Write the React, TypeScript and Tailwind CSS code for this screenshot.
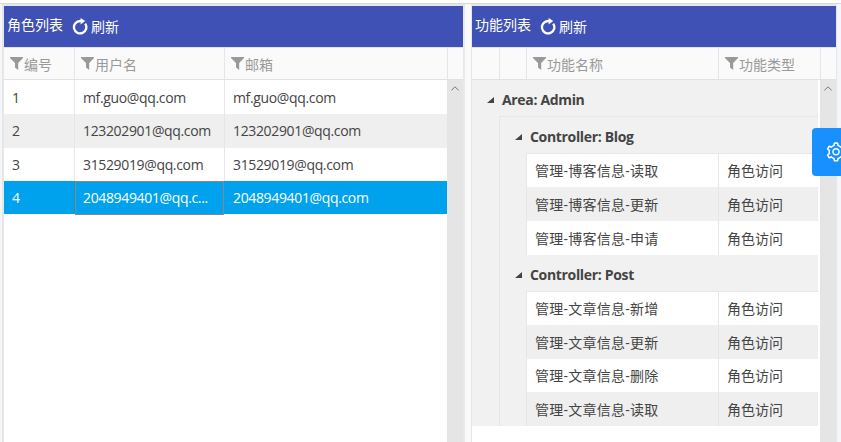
import type { ReactNode } from "react";
import { AiOutlineSetting } from "react-icons/ai";

function ReloadIcon() {
  return (
    <svg viewBox="0 0 16 17" className="-ml-px mr-px h-[17px] w-4 shrink-0" fill="none">
      <path d="M9.5 3H8.3A6.2 6.2 0 1 0 13.2 5.6" stroke="white" strokeWidth="2.3" />
      <path d="M8.6 0L13.2 3L8.6 6.4Z" fill="white" />
    </svg>
  );
}

function FilterIcon() {
  return (
    <svg viewBox="0 0 13 13" className="h-[13px] w-[13px] shrink-0" fill="#999">
      <path d="M0 0H13V1L8.2 6V13L5 10.5V6L0 1Z" />
    </svg>
  );
}

function Toolbar({ title }: { title: string }) {
  return (
    <div className="flex h-[41px] bg-[#3f51b5] pl-[3px] text-white">
      <span className="mt-[9px] w-[66px] leading-5">{title}</span>
      <span className="mt-3 flex h-[17px] items-center">
        <ReloadIcon />
        <span className="ml-[2px] leading-5">刷新</span>
      </span>
    </div>
  );
}

function Head({ children, width }: { children?: ReactNode; width: string }) {
  return (
    <div className={`flex h-full shrink-0 items-center border-r border-[#e6e6e6] pl-[6px] ${width}`}>
      {children && (
        <>
          <FilterIcon />
          <span className="ml-[1px] mt-[2px]">{children}</span>
        </>
      )}
    </div>
  );
}

function Scrollbar() {
  return (
    <div className="flex w-4 shrink-0 justify-center bg-[#e5e5e5] pt-[6px]">
      <svg viewBox="0 0 8 5" className="h-[5px] w-2" fill="none" stroke="#777">
        <path d="M0.3 4.5L4 0.8L7.7 4.5" />
      </svg>
    </div>
  );
}

const users = [
  { id: "1", name: "mf.guo@qq.com", mail: "mf.guo@qq.com", row: "h-[34px] leading-[36px] bg-white" },
  { id: "2", name: "123202901@qq.com", mail: "123202901@qq.com", row: "h-[34px] leading-[34px] bg-[#efefef]" },
  { id: "3", name: "31529019@qq.com", mail: "31529019@qq.com", row: "h-[33px] leading-[34px] bg-white" },
  {
    id: "4",
    name: "2048949401@qq.c...",
    mail: "2048949401@qq.com",
    row: "h-[33px] leading-[34px] bg-[#00a2ed] text-white",
    selected: true,
  },
];

const groups = [
  {
    name: "Blog",
    items: [
      { name: "管理-博客信息-读取", row: "h-[33px] leading-[33px] bg-white" },
      { name: "管理-博客信息-更新", row: "h-[34px] leading-[35px] bg-[#efefef]" },
      { name: "管理-博客信息-申请", row: "h-[34px] leading-[35px] bg-white" },
    ],
  },
  {
    name: "Post",
    items: [
      { name: "管理-文章信息-新增", row: "h-[33px] leading-[33px] bg-white" },
      { name: "管理-文章信息-更新", row: "h-[34px] leading-[35px] bg-[#efefef]" },
      { name: "管理-文章信息-删除", row: "h-[33px] leading-[33px] bg-white" },
      { name: "管理-文章信息-读取", row: "h-[34px] leading-[35px] bg-[#efefef]" },
    ],
  },
];

function Caret() {
  return (
    <svg viewBox="0 0 7 6" className="h-[6px] w-[7px]" fill="#444">
      <path d="M7 0V6H0Z" />
    </svg>
  );
}

function RolePanel() {
  return (
    <section className="flex w-[463px] shrink-0 flex-col border-x-2 border-t-2 border-[#e6e6e6] border-r-[#e9e9e9]">
      <Toolbar title="角色列表" />
      <div className="flex h-[33px] border-y border-[#e2e2e2] bg-[#fafafa] text-[#999]">
        <Head width="w-[71px]">编号</Head>
        <Head width="w-[150px]">用户名</Head>
        <Head width="w-[223px]">邮箱</Head>
      </div>
      <div className="flex grow">
        <div className="grow text-[#444]">
          {users.map((u) => (
            <div key={u.id} className={`flex tracking-[-0.35px] ${u.row}`}>
              <div className={`w-[71px] border-r pl-2 ${u.selected ? "border-[#0d96d8]" : "border-[#e6e6e6]"}`}>{u.id}</div>
              <div
                className={
                  u.selected
                    ? "mr-px h-[34px] w-[149px] border border-[#888] pl-[7px] leading-[32px]"
                    : "w-[150px] border-r border-[#e6e6e6] pl-2"
                }
              >
                {u.name}
              </div>
              <div className="pl-2">{u.mail}</div>
            </div>
          ))}
        </div>
        <Scrollbar />
      </div>
    </section>
  );
}

function FunctionPanel() {
  return (
    <section className="flex w-[366px] shrink-0 flex-col border-x border-t-2 border-[#e6e6e6]">
      <Toolbar title="功能列表" />
      <div className="flex h-[33px] border-y border-[#e2e2e2] bg-[#fafafa] text-[#999]">
        <Head width="w-[28px]" />
        <Head width="w-[27px]" />
        <Head width="w-[192px]">功能名称</Head>
        <Head width="w-[102px]">功能类型</Head>
      </div>
      <div className="flex grow">
        <div className="mr-[2px] grow text-[#444]">
          <div className="bg-[#f1f1f1]">
            <div className="flex h-9 items-center gap-2 pl-[15px] pt-1 font-bold tracking-[-0.33px]">
              <Caret />
              <span>Area: Admin</span>
            </div>
            <div className="ml-[27px] border-l border-t border-[#e6e6e6]">
              {groups.map((g) => (
                <div key={g.name}>
                  <div className="flex h-9 items-center gap-2 pl-[15px] pt-1 font-bold tracking-[-0.33px]">
                    <Caret />
                    <span>Controller: {g.name}</span>
                  </div>
                  <div className="ml-[26px] border-l border-t border-[#e6e6e6]">
                    {g.items.map((f) => (
                      <div key={f.name} className={`flex ${f.row}`}>
                        <div className="w-[192px] border-r border-[#e6e6e6] pl-2 tracking-[0.25px]">{f.name}</div>
                        <div className="pl-2">角色访问</div>
                      </div>
                    ))}
                  </div>
                </div>
              ))}
            </div>
          </div>
        </div>
        <Scrollbar />
      </div>
    </section>
  );
}

export default function App() {
  return (
    <div className="relative flex h-[442px] w-[841px] flex-col overflow-hidden bg-[#f5f6fa] font-['Open_Sans','Noto_Sans_CJK_SC',sans-serif] text-sm leading-5 whitespace-nowrap">
      <div className="h-1 shrink-0 border-b border-[#d9d9d9] bg-white" />
      <main className="flex grow pl-[2px]">
        <div className="flex bg-white">
          <RolePanel />
          <div className="w-[6px] bg-[#fafafa]" />
          <FunctionPanel />
        </div>
      </main>
      <button className="absolute left-[812px] top-32 flex h-12 w-12 items-center rounded bg-[#1890ff] pl-[13px] text-white">
        <AiOutlineSetting className="h-[22px] w-[22px]" />
      </button>
    </div>
  );
}
